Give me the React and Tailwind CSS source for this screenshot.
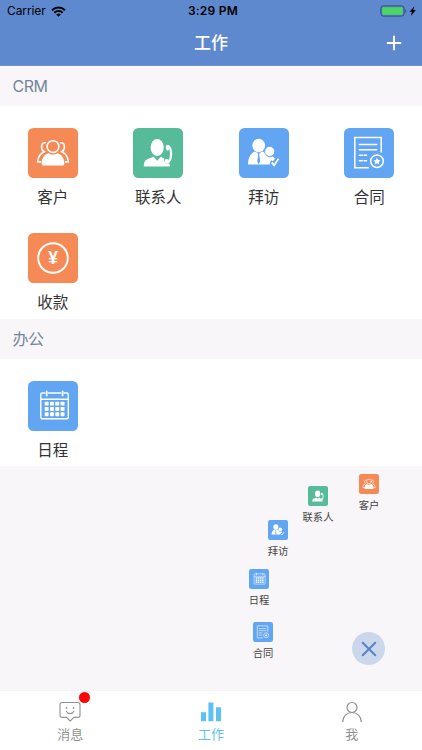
const CustomerIcon = ({ className }) => (
  <svg viewBox="0 0 50 50" className={className}>
    <rect width="50" height="50" rx="5.5" fill="#f58a57" />
    <g fill="none" stroke="#fff" strokeWidth="1.600" strokeLinecap="round">
      <path d="M17.200 14.800c-2.300 0-3.600 1.700-3.600 4.100 0 2.200 1.100 3.900 2.600 4.800-3.800 1.600-6.200 5.500-6.500 10.200h2.800" />
      <path d="M32.800 14.800c2.300 0 3.600 1.700 3.600 4.100 0 2.200-1.100 3.900-2.600 4.800 3.800 1.600 6.200 5.500 6.500 10.200h-2.800" />
      <circle cx="25" cy="18.600" r="5.900" />
    </g>
    <path d="M20.300 25.200c1.400.9 3 1.400 4.700 1.400s3.300-.5 4.700-1.400c4.200 1.400 6.600 5.500 6.600 10.200 0 1.400-.7 2.100-2.100 2.100H15.800c-1.400 0-2.100-.7-2.100-2.100 0-4.700 2.400-8.800 6.600-10.200z" fill="#fff" />
  </svg>
);

const ContactIcon = ({ className }) => (
  <svg viewBox="0 0 50 50" className={className}>
    <rect width="50" height="50" rx="5.500" fill="#55bb99" />
    <ellipse cx="24.200" cy="19.500" rx="6.600" ry="8.400" fill="#fff" />
    <path d="M10.800 38.600c0-4.300 1-6.500 3.500-7.400 2.200-.7 4.200-1.100 6-2.600l3.900 4.100 3.900-4.100c1 .9 2 1.500 3.200 1.900-.6 3 1.300 5.500 5.200 5.200.3 1 .4 1.800.4 2.900z" fill="#fff" />
    <g fill="none" stroke="#fff" strokeLinecap="round">
      <path d="M35.500 18.200c3.300 2.800 3.500 12 .1 15.500" strokeWidth="2.200" />
      <path d="M34.400 18.500l.3 2.500" strokeWidth="3.200" />
      <path d="M33.700 33l1 .5" strokeWidth="4" />
    </g>
  </svg>
);

const VisitIcon = ({ className }) => (
  <svg viewBox="0 0 50 50" className={className}>
    <rect width="50" height="50" rx="5.500" fill="#62a5f2" />
    <ellipse cx="19.700" cy="17.500" rx="6.400" ry="6.800" fill="#fff" />
    <path d="M9 36.400c.2-6.200 2.200-10.600 6.600-12.800l4.100 1.700 4.100-1.700c4.400 2.200 6.300 6.600 6.600 12.800z" fill="#fff" />
    <path d="M18.700 25h2l-.5 1.700 1 6.600-1.500 3.100-1.500-3.100 1-6.600z" fill="#62a5f2" />
    <circle cx="30.700" cy="23.500" r="5" fill="#fff" stroke="#62a5f2" strokeWidth=".8" />
    <path d="M27.600 28.600c1.900 1 4.300 1 6.200 0 1 .5 1.700 1.200 2.200 2.200l-2.300 2.600-1.400-1.400-1.900 4.400h-.5c-.2-3-1-5.700-2.300-7.800z" fill="#fff" />
    <path d="M32.800 34.700l2.300 2.500 4.400-6.400" fill="none" stroke="#fff" strokeWidth="1.900" />
  </svg>
);

const ContractIcon = ({ className }) => (
  <svg viewBox="0 0 50 50" className={className}>
    <rect width="50" height="50" rx="5.500" fill="#62a5f2" />
    <g fill="none" stroke="#fff" strokeWidth="1.500">
      <path d="M37.200 24.500V9.500H10.800v30.300h14.100" />
      <path d="M15.300 16.500h17.400M15.300 21.800h17.400M15.300 27.300h3M20 27.300h2.500M15.300 32.700h3M20 32.700h2.500" strokeLinecap="round" />
      <circle cx="33" cy="33.200" r="6.300" />
    </g>
    <path d="M33 29.800l1.100 2.200 2.400.3-1.700 1.700.4 2.400-2.200-1.100-2.200 1.100.4-2.400-1.700-1.700 2.400-.3z" fill="#fff" />
  </svg>
);

const PaymentIcon = ({ className }) => (
  <svg viewBox="0 0 50 50" className={className}>
    <rect width="50" height="50" rx="5.500" fill="#f58a57" />
    <circle cx="25" cy="25" r="14.800" fill="none" stroke="#fff" strokeWidth="1.900" />
    <text x="25" y="31" textAnchor="middle" fill="#fff" className="font-['Liberation_Sans',sans-serif] text-[17.500px] font-bold">¥</text>
  </svg>
);

const ScheduleIcon = ({ className }) => (
  <svg viewBox="0 0 50 50" className={className}>
    <rect width="50" height="50" rx="5.500" fill="#62a5f2" />
    <g fill="none" stroke="#fff" strokeWidth="1.400" strokeLinecap="round">
      <path d="M16.800 12h-2.500c-1 0-1.500.5-1.500 1.500v22.700c0 1 .5 1.500 1.500 1.500h24.500c1 0 1.500-.5 1.500-1.500V13.500c0-1-.5-1.500-1.500-1.500h-2.500M20.500 12h12.200M12.800 18.200h27.500" />
      <path d="M18.700 10.500v4M34.600 10.500v4" strokeWidth="1.800" />
    </g>
    {[20.7, 26, 31.300].map((y) =>
      [16.7, 22, 27.300, 32.600].map((x) => (
        <rect key={`${x}-${y}`} x={x} y={y} width="3.900" height="3.900" rx=".6" fill="#fff" />
      ))
    )}
  </svg>
);

const crmItems = [
  { label: '客户', icon: CustomerIcon },
  { label: '联系人', icon: ContactIcon },
  { label: '拜访', icon: VisitIcon },
  { label: '合同', icon: ContractIcon },
  { label: '收款', icon: PaymentIcon }
];

const officeItems = [{ label: '日程', icon: ScheduleIcon }];

// Shortcuts fan out around the round close button
const shortcuts = [
  { label: '客户', icon: CustomerIcon, place: 'left-[349px] top-[474px]' },
  { label: '联系人', icon: ContactIcon, place: 'left-[298px] top-[486px]' },
  { label: '拜访', icon: VisitIcon, place: 'left-[258px] top-[520px]' },
  { label: '日程', icon: ScheduleIcon, place: 'left-[239px] top-[569px]' },
  { label: '合同', icon: ContractIcon, place: 'left-[243px] top-[622px]' }
];

const SectionTitle = ({ children }) => (
  <h2 className="flex h-10 shrink-0 items-center bg-[#f8f6f8] pl-[12.500px] text-base tracking-[-0.500px] text-[#74869d]">{children}</h2>
);

const ItemGrid = ({ items, className }) => (
  <div className={`grid shrink-0 grid-cols-4 bg-white ${className}`}>
    {items.map((item) => {
      const Icon = item.icon;
      return (
        <div key={item.label} className="flex h-[105.500px] flex-col items-center">
          <Icon className="size-[50px]" />
          <span className="mt-2 text-[15.500px] leading-6 text-[#333]">{item.label}</span>
        </div>
      );
    })}
  </div>
);

const StatusBar = () => (
  <div className="grid h-[22px] grid-cols-3 items-center font-[Inter,sans-serif] text-xs text-black">
    <div className="flex items-center gap-[5px] pl-[7px]">
      <span className="tracking-[-0.1px]">Carrier</span>
      <svg viewBox="0 0 15 11" className="h-[11px] w-[15px]" fill="none" stroke="#000" strokeWidth="2">
        <path d="M1 4.300c3.700-3.600 9.300-3.600 13 0M3.300 6.700c2.400-2.300 6-2.300 8.400 0" />
        <path d="M7.500 10.700L5.200 8.400c1.300-1.200 3.300-1.200 4.600 0z" fill="#000" stroke="none" />
      </svg>
    </div>
    <div className="pl-1 text-center font-semibold tracking-[0.25px]">3:29 PM</div>
    <div className="flex items-center justify-end pr-[5px]">
      <svg viewBox="0 0 37 12" className="h-3 w-[37px]">
        <rect x=".9" y=".9" width="23.200" height="10.200" rx="2.500" fill="none" stroke="#304a7a" />
        <rect x="2.300" y="2.300" width="20.400" height="7.400" rx="1.300" fill="#4bd763" />
        <path d="M25.300 4.200c1.300.4 1.300 3.200 0 3.600z" fill="#304a7a" />
        <path d="M34.500 1.200l-5 5.600h2.500l-1.200 4.100 5-5.800h-2.600z" fill="#000" />
      </svg>
    </div>
  </div>
);

const App = () => {
  return (
    <div className="relative flex h-[750px] w-[422px] flex-col overflow-hidden bg-[#f8f6f8] font-[Inter,'Noto_Sans_CJK_SC',sans-serif]">
      <header className="h-[66px] shrink-0 border-b border-[#7293c6] bg-[#5f89cf]">
        <StatusBar />
        <div className="grid h-[43px] grid-cols-3 items-center text-white">
          <span />
          <h1 className="text-center text-[17px] font-medium">工作</h1>
          <svg viewBox="0 0 16 16" className="mr-5 size-4 -translate-y-px justify-self-end" stroke="#fff" strokeWidth="1.900">
            <path d="M8 .8v14.400M.8 8h14.400" />
          </svg>
        </div>
      </header>

      <SectionTitle>CRM</SectionTitle>
      <ItemGrid items={crmItems} className="h-[213px] pt-[21.500px]" />
      <SectionTitle>办公</SectionTitle>
      <ItemGrid items={officeItems} className="h-[107px] pt-[21.500px]" />

      {/* Shortcut menu */}
      {shortcuts.map((item) => {
        const Icon = item.icon;
        return (
          <div key={item.label} className={`absolute flex w-10 flex-col items-center ${item.place}`}>
            <Icon className="size-5" />
            <span className="mt-1 text-[10.300px] leading-[15px] text-[#444]">{item.label}</span>
          </div>
        );
      })}
      <button className="absolute left-[352px] top-[632px] flex size-[33px] items-center justify-center rounded-full bg-[#cbd7ec]">
        <svg viewBox="0 0 16 16" className="size-4" stroke="#5b82c4" strokeWidth="2" strokeLinecap="round">
          <path d="M1.700 1.700l12.600 12.600M14.300 1.700L1.700 14.300" />
        </svg>
      </button>

      {/* Tab bar */}
      <nav className="mt-auto grid h-[60px] shrink-0 grid-cols-3 border-t border-[#f4f2f4] bg-white pt-2.5 text-[13px] leading-5 text-[#929292]">
        <div className="flex flex-col items-center">
          <div className="relative">
            <svg viewBox="0 0 22 22" className="size-[22px]" fill="none" stroke="#929292" strokeWidth="1.100" strokeLinecap="round" strokeLinejoin="round">
              <path d="M3.200 1.500h15.600c1.500 0 2.200.7 2.200 2.200v10.500c0 1.500-.7 2.200-2.200 2.200h-4L11.200 20l-3.700-3.600H3.200c-1.500 0-2.200-.7-2.200-2.200V3.700c0-1.500.7-2.200 2.200-2.200z" />
              <path d="M7.300 10.300c1.500 3.200 6 3.200 7.600 0" />
              <path d="M7.500 6.800v.2M14.500 6.800v.2" strokeWidth="1.700" />
            </svg>
            <span className="absolute -right-[9px] -top-[9px] size-[11px] rounded-full bg-[#ff0202]" />
          </div>
          <span className="mt-px">消息</span>
        </div>
        <div className="flex flex-col items-center text-[#5dc1f4]">
          <svg viewBox="0 0 22 22" className="size-[22px]" fill="currentColor">
            <path d="M1 11.300h5v9H1zM8.400 1.500h5v18.800h-5zM16 6.300h5v14h-5z" />
          </svg>
          <span className="mt-px">工作</span>
        </div>
        <div className="flex flex-col items-center">
          <svg viewBox="0 0 22 22" className="size-[22px]" fill="none" stroke="#929292" strokeWidth="1.200">
            <circle cx="11" cy="6.500" r="5" />
            <path d="M1.700 21c.2-5.700 4-9.500 9.300-9.500s9.100 3.800 9.300 9.500" />
          </svg>
          <span className="mt-px">我</span>
        </div>
      </nav>
    </div>
  );
};

export default App;
